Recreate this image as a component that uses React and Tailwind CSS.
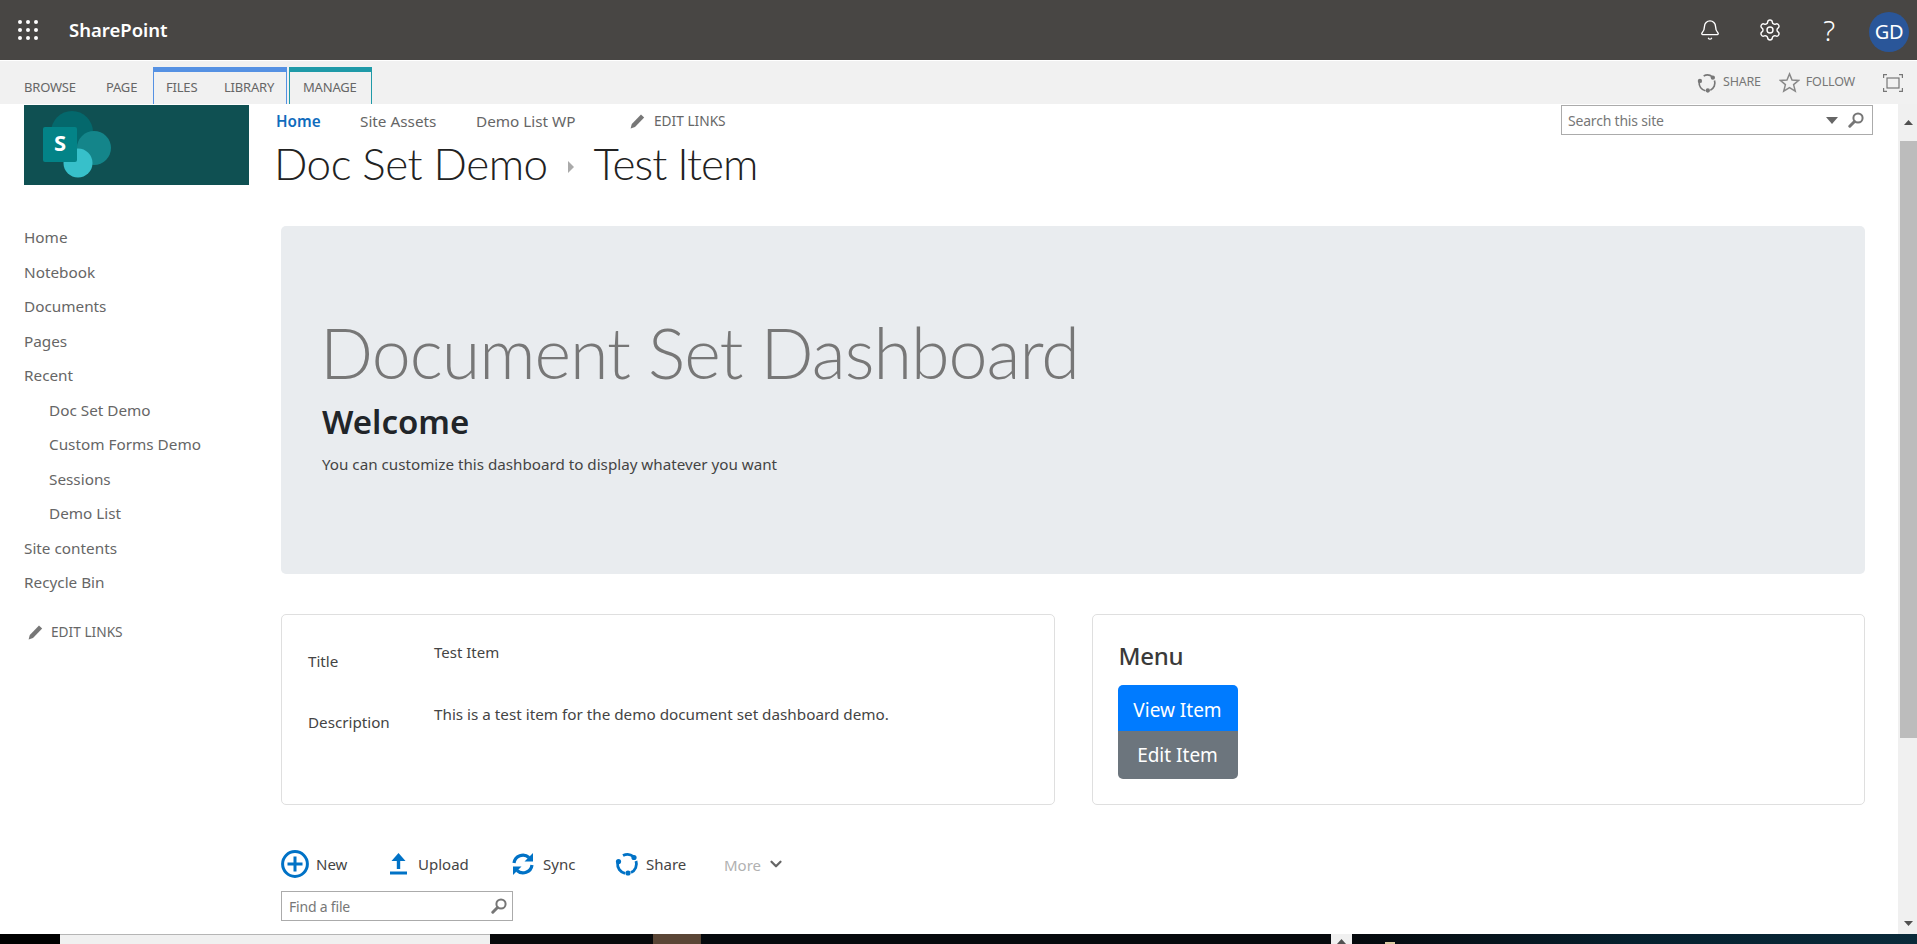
import { Bell, Settings, ChevronDown } from "lucide-react";

const font = { fontFamily: '"Noto Sans", "Open Sans", sans-serif' };

const sideLinks = [
  { label: "Home" },
  { label: "Notebook" },
  { label: "Documents" },
  { label: "Pages" },
  { label: "Recent" },
  { label: "Doc Set Demo", sub: true },
  { label: "Custom Forms Demo", sub: true },
  { label: "Sessions", sub: true },
  { label: "Demo List", sub: true },
  { label: "Site contents" },
  { label: "Recycle Bin" },
];

const Waffle = () => (
  <svg width="20" height="20" viewBox="0 0 20 20" fill="#fff">
    {[2, 10, 18].map((y) =>
      [2, 10, 18].map((x) => <circle key={`${x}-${y}`} cx={x} cy={y} r="2" />)
    )}
  </svg>
);

const ShareIcon = ({ color, size = 24, w = 2.4 }) => (
  <svg width={size} height={size} viewBox="0 0 24 24" fill="none">
    <path d="M8 3.6 A9.5 9.5 0 0 1 18.5 4.6" stroke={color} strokeWidth={w} />
    <path d="M21 9 A9.5 9.5 0 0 1 16 20.6" stroke={color} strokeWidth={w} />
    <path d="M10 21.3 A9.5 9.5 0 0 1 2.6 11" stroke={color} strokeWidth={w} />
    <circle cx="19" cy="5.5" r="2.6" fill={color} />
    <circle cx="3.5" cy="9.5" r="2.6" fill={color} />
    <circle cx="13" cy="21" r="2.6" fill={color} />
  </svg>
);

const Magnifier = ({ size = 16, color = "#767676" }) => (
  <svg width={size} height={size} viewBox="0 0 16 16" fill="none">
    <circle cx="10" cy="6" r="4.6" stroke={color} strokeWidth="2" />
    <path d="M6.5 9.5 L1.8 14.2" stroke={color} strokeWidth="3" strokeLinecap="round" />
  </svg>
);

const Pencil = () => (
  <svg width="15" height="15" viewBox="0 0 15 15" fill="#777">
    <path d="M11 .6 L14.2 3.4 L5 13 L.6 14.6 L1.8 10 Z" />
  </svg>
);

const Logo = () => (
  <svg width="225" height="80" viewBox="0 0 225 80" className="block bg-[#0f5052]">
    <circle cx="48" cy="27" r="21" fill="#04686c" />
    <circle cx="70" cy="43" r="17" fill="#14858a" />
    <circle cx="54" cy="58" r="14.5" fill="#37c0ca" />
    <rect x="19" y="22" width="34" height="35" rx="2" fill="#038387" />
    <text x="36" y="46" textAnchor="middle" fill="#fff" fontSize="22" fontWeight="700" style={font}>S</text>
  </svg>
);

const App = () => {
  return (
    <div className="w-[1917px] h-[944px] overflow-hidden flex flex-col bg-white text-[#444]" style={font}>
      {/* Suite bar */}
      <div className="h-[60px] shrink-0 bg-[#484644] flex items-center text-white">
        <div className="ml-[18px]"><Waffle /></div>
        <span className="ml-[31px] text-[18.5px] font-semibold leading-6">SharePoint</span>
        <div className="ml-auto flex items-center">
          <Bell size={22} strokeWidth={1.5} className="mr-[37px]" />
          <Settings size={24} strokeWidth={1.4} className="mr-[41px]" />
          <span className="text-[28px] font-light leading-none mr-[34px]">?</span>
          <div className="w-10 h-10 mt-1 mr-2 rounded-full bg-[#2a5699] flex items-center justify-center text-[20px] tracking-[-0.3px]">GD</div>
        </div>
      </div>

      {/* Ribbon */}
      <div className="h-[43px] mt-px shrink-0 bg-[#f1f1f1] flex text-[13px] text-[#666] tracking-[-0.2px]">
        <div className="flex items-end">
          <span className="ml-6 w-[82px] h-[33px] leading-[32px]">BROWSE</span>
          <span className="w-[47px] h-[33px] leading-[32px]">PAGE</span>
          <div className="w-[134px] h-[37px] border-t-[5px] border-x border-[#5591e3] border-t-[#5591e3] flex">
            <span className="ml-3 w-[58px] leading-[31px]">FILES</span>
            <span className="leading-[31px]">LIBRARY</span>
          </div>
          <div className="ml-[2px] w-[83px] h-[37px] border-t-[5px] border-x border-[#1f9aa8] border-t-[#1f9aa8]">
            <span className="block ml-[13px] leading-[31px]">MANAGE</span>
          </div>
        </div>
        <div className="ml-auto flex items-center text-[#777]">
          <ShareIcon color="#777" size={20} w={2} />
          <span className="ml-[6px] mr-[18px] text-[12.5px]">SHARE</span>
          <svg width="21" height="21" viewBox="0 0 20 20" fill="none" stroke="#888" strokeWidth="1.4">
            <path d="M10 1.8 L12.4 7.6 L18.8 8 L13.9 12 L15.5 18.3 L10 14.9 L4.5 18.3 L6.1 12 L1.2 8 L7.6 7.6 Z" />
          </svg>
          <span className="ml-[6px] mr-[28px] text-[12.5px]">FOLLOW</span>
          <svg width="20" height="18" viewBox="0 0 20 18" fill="none" stroke="#777" strokeWidth="1.2" className="mr-[14px]">
            <path d="M.6 4 V.6 H4 M16 .6 H19.4 V4 M19.4 14 V17.4 H16 M4 17.4 H.6 V14" />
            <rect x="4" y="4" width="12" height="10" />
          </svg>
        </div>
      </div>

      {/* Page */}
      <div className="flex-1 flex min-h-0">
        {/* Left nav */}
        <div className="w-[276px] shrink-0 pl-6 pt-px">
          <Logo />
          <nav className="mt-[35px] text-[15.3px] text-[#666]">
            {sideLinks.map((link) => (
              <div key={link.label} className={`h-[34.5px] leading-[34px] ${link.sub ? "pl-[25px]" : ""}`}>{link.label}</div>
            ))}
          </nav>
          <div className="mt-[16px] ml-1 h-[34px] flex items-center text-[13.7px] text-[#666]">
            <Pencil />
            <span className="ml-[8px]">EDIT LINKS</span>
          </div>
        </div>

        {/* Main column */}
        <div className="flex-1 min-w-0">
          <div className="h-[122px] flex justify-between">
            <div>
              <div className="h-[34px] flex items-center text-[15.3px] text-[#666]">
                <span className="w-[84px] font-semibold text-[#0f6cbd]">Home</span>
                <span className="w-[116px]">Site Assets</span>
                <span className="w-[154px]">Demo List WP</span>
                <Pencil />
                <span className="ml-[9px] text-[13.7px]">EDIT LINKS</span>
              </div>
              <div className="h-[54px] -mt-[2px] -ml-[2px] flex items-center text-[44px] font-light text-[#222] [font-family:Lato]">
                <span className="tracking-[-0.5px]">Doc Set Demo</span>
                <svg width="8" height="12" viewBox="0 0 8 12" className="mx-[19px] mt-2" fill="#aaa"><path d="M1 0 L7 6 L1 12 Z" /></svg>
                <span className="tracking-[-1px]">Test Item</span>
              </div>
            </div>
            <div className="mt-px mr-[25px] w-[312px] h-[30px] border border-[#ababab] flex items-center pl-[6px] pr-[8px] text-[14px] text-[#777] bg-white">
              <span className="tracking-[-0.2px]">Search this site</span>
              <svg width="12" height="7" viewBox="0 0 12 7" className="ml-auto mr-[10px]" fill="#666"><path d="M0 0 H12 L6 7 Z" /></svg>
              <Magnifier />
            </div>
          </div>

          {/* Jumbotron */}
          <div className="ml-[5px] mr-[33px] h-[348px] rounded-[5px] bg-[#e9ecef] pl-[41px] pt-[83px]">
            <h1 className="text-[70px] leading-[86px] font-light text-[#777] tracking-[-1px] [font-family:Lato] -ml-[2px]">Document Set Dashboard</h1>
            <h2 className="mt-[7px] text-[33px] leading-10 font-semibold text-[#212529]">Welcome</h2>
            <p className="mt-[12px] text-[15.2px] leading-5 text-[#444]">You can customize this dashboard to display whatever you want</p>
          </div>

          {/* Cards */}
          <div className="ml-[5px] mr-[33px] mt-[40px] h-[191px] grid grid-cols-2 gap-[37px]">
            <div className="rounded-[5px] border border-[#dfdfdf] pl-[26px] pr-4">
              <div className="flex h-[61px]">
                <span className="w-[126px] pt-[36px] text-[15.2px] leading-5">Title</span>
                <span className="pt-[27px] text-[15px] leading-5">Test Item</span>
              </div>
              <div className="flex">
                <span className="w-[126px] pt-[36px] text-[15.2px] leading-5">Description</span>
                <span className="pt-[28px] text-[15.25px] leading-5">This is a test item for the demo document set dashboard demo.</span>
              </div>
            </div>
            <div className="rounded-[5px] border border-[#dfdfdf] pl-[25px]">
              <h3 className="mt-[23px] ml-px h-[35px] text-[24px] leading-[35px] font-medium text-[#3a3a3a] tracking-[-0.3px]">Menu</h3>
              <div className="mt-[12px] w-[120px] flex flex-col text-white text-[19px]">
                <button className="h-[46px] pt-1 bg-[#007bff] rounded-t-[5px]">View Item</button>
                <button className="h-[48px] pt-px bg-[#6c757d] rounded-b-[5px]">Edit Item</button>
              </div>
            </div>
          </div>

          {/* Library command bar */}
          <div className="ml-[5px] mt-[45px] h-[28px] flex items-center text-[15px] text-[#444]">
            <svg width="28" height="28" viewBox="0 0 28 28" fill="none" stroke="#0072c6">
              <circle cx="14" cy="14" r="12.4" strokeWidth="3" />
              <path d="M14 6.5 V21.5 M6.5 14 H21.5" strokeWidth="3" />
            </svg>
            <span className="ml-[7px] w-[74px]">New</span>
            <svg width="17" height="22" viewBox="0 0 17 22" fill="#0072c6">
              <path d="M8.5 0 L15.5 8 H10.2 V16 H6.8 V8 H1.5 Z" />
              <rect y="18.5" width="17" height="3" />
            </svg>
            <span className="ml-[11px] w-[94px]">Upload</span>
            <svg width="22" height="24" viewBox="0 0 22 24" fill="none" stroke="#0072c6" strokeWidth="3.2">
              <path d="M2 11 A9 9 0 0 1 17 5.5" />
              <path d="M20 13 A9 9 0 0 1 5 18.5" />
              <path d="M21 1 V9.5 H12.5 Z" fill="#0072c6" strokeWidth="0" />
              <path d="M1 23 V14.5 H9.5 Z" fill="#0072c6" strokeWidth="0" />
            </svg>
            <span className="ml-[9px] w-[72px]">Sync</span>
            <ShareIcon color="#0072c6" size={24} w={2.8} />
            <span className="ml-[7px] w-[78px]">Share</span>
            <span className="text-[#b1b1b1] mt-[2px]">More</span>
            <ChevronDown size={18} strokeWidth={3} color="#666" className="ml-[6px]" />
          </div>
          <div className="ml-[5px] mt-[13px] w-[232px] h-[30px] border border-[#ababab] flex items-center pl-[7px] pr-[5px] text-[14px] text-[#777]">
            <span className="tracking-[-0.2px]">Find a file</span>
            <span className="ml-auto"><Magnifier /></span>
          </div>
        </div>

        {/* Page scrollbar */}
        <div className="w-[19px] shrink-0 bg-[#f0f0f0] flex flex-col items-end">
          <div className="w-[17px] h-[37px] flex items-center justify-center">
            <svg width="9" height="5" viewBox="0 0 9 5" fill="#505050"><path d="M4.5 0 L9 5 H0 Z" /></svg>
          </div>
          <div className="w-[17px] h-[597px] bg-[#bcbcbc]" />
          <div className="w-[17px] flex-1 flex items-end justify-center pb-[8px]">
            <svg width="9" height="5" viewBox="0 0 9 5" fill="#505050"><path d="M0 0 H9 L4.5 5 Z" /></svg>
          </div>
        </div>
      </div>

      {/* Desktop strip under the window */}
      <div className="h-[10px] shrink-0 flex overflow-hidden">
        <div className="w-[60px] bg-black" />
        <div className="w-[430px] bg-[#f0f0f0] border-t border-[#b5b5b5]" />
        <div className="w-[163px] bg-[#08090b]" />
        <div className="w-[48px] bg-[#5a4535]" />
        <div className="w-[630px] bg-[#06090d]" />
        <div className="w-[21px] bg-[#f0f0f0] flex justify-center pt-[5px]">
          <svg width="9" height="5" viewBox="0 0 9 5" fill="#505050"><path d="M4.5 0 L9 5 H0 Z" /></svg>
        </div>
        <div className="flex-1 bg-gradient-to-r from-[#05090d] via-[#05202e] to-[#0a2a3a] flex text-white text-[13px] leading-5">
          <div className="ml-[33px] mt-[8px] w-[10px] h-[2px] bg-[#d8c9a0]" />
          <span className="ml-[391px] mt-[5px]">7:22 PM</span>
        </div>
      </div>
    </div>
  );
};

export default App;
